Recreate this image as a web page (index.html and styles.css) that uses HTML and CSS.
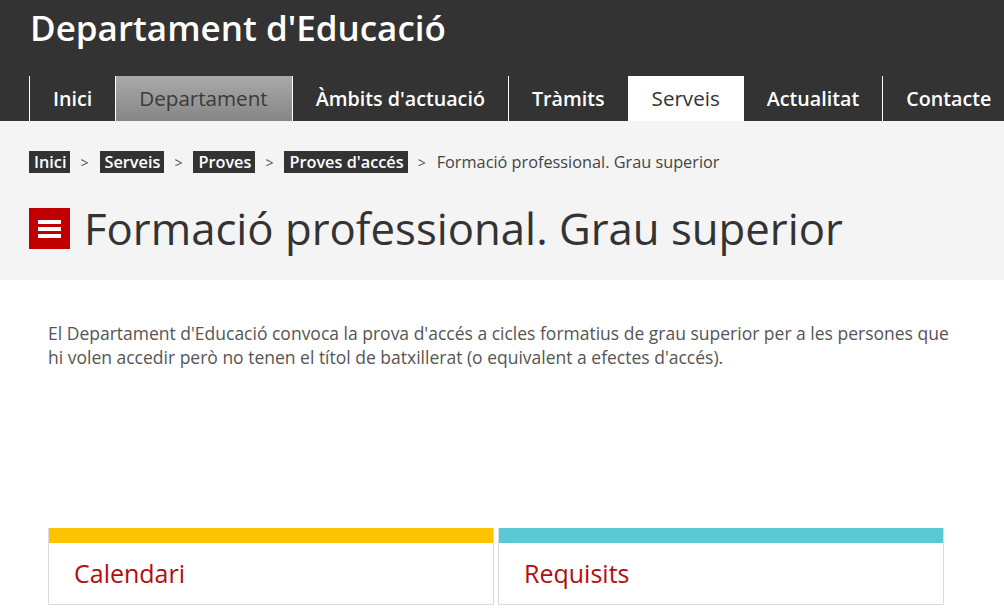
FILE: index.html
```html
<!DOCTYPE html>
<html lang="ca">
<head>
<meta charset="utf-8">
<title>Formació professional. Grau superior</title>
<link rel="stylesheet" href="styles.css">
</head>
<body>
<header class="site-header">
  <div class="brand">Departament d'Educació</div>
  <nav class="main-nav">
    <a class="tab" href="#">Inici</a>
    <a class="tab tab-grey" href="#">Departament</a>
    <a class="tab" href="#">Àmbits d'actuació</a>
    <a class="tab" href="#">Tràmits</a>
    <a class="tab tab-active" href="#">Serveis</a>
    <a class="tab" href="#">Actualitat</a>
    <a class="tab" href="#">Contacte</a>
  </nav>
</header>
<section class="page-head">
  <div class="crumbs">
    <a class="crumb" href="#">Inici</a><span class="sep">&gt;</span>
    <a class="crumb" href="#">Serveis</a><span class="sep">&gt;</span>
    <a class="crumb" href="#">Proves</a><span class="sep">&gt;</span>
    <a class="crumb" href="#">Proves d'accés</a><span class="sep">&gt;</span>
    <span class="crumb-current">Formació professional. Grau superior</span>
  </div>
  <h1 class="page-title">
    <span class="menu-icon"><span></span><span></span><span></span></span>
    Formació professional. Grau superior
  </h1>
</section>
<main class="content">
  <p class="intro">El Departament d'Educació convoca la prova d'accés a cicles formatius de grau superior per a les persones que hi volen accedir però no tenen el títol de batxillerat (o equivalent a efectes d'accés).</p>
  <div class="cards">
    <div class="card card-yellow"><div class="card-bar"></div><div class="card-body">Calendari</div></div>
    <div class="card card-teal"><div class="card-bar"></div><div class="card-body">Requisits</div></div>
  </div>
</main>
</body>
</html>
```

FILE: styles.css
```css
html, body {
  margin: 0;
  padding: 0;
  background: #fff;
  font-family: "Open Sans", "Noto Sans", sans-serif;
  overflow: hidden;
}

.site-header {
  background: #333333;
  height: 121px;
  display: flex;
  flex-direction: column;
}

.brand {
  color: #fff;
  font-size: 35px;
  font-weight: 600;
  line-height: 1;
  padding: 10px 0 0 30px;
  height: 76px;
  box-sizing: border-box;
  flex: none;
}

.main-nav {
  display: flex;
  padding-left: 29px;
  height: 45px;
  white-space: nowrap;
}

.tab {
  display: flex;
  align-items: center;
  border-left: 1px solid #fff;
  padding: 0 23px 1px 23px;
  color: #fff;
  text-decoration: none;
  font-size: 19.7px;
  font-weight: 600;
  flex: none;
}

.tab-grey {
  background: linear-gradient(#a9a9a9, #868686);
  color: #3a3a3a;
  font-weight: 400;
  font-size: 20.6px;
  padding-right: 24px;
}

.tab-active {
  background: #fff;
  color: #333;
  font-weight: 400;
  font-size: 20.6px;
}

.page-head {
  background: #f4f4f4;
  height: 159px;
  padding: 30px 0 0 29px;
  box-sizing: border-box;
}

.crumbs {
  display: flex;
  align-items: center;
  height: 22px;
  font-size: 16.3px;
}

.crumb {
  background: #333;
  color: #fff;
  font-weight: 600;
  text-decoration: none;
  padding: 0 4px 0 5px;
  line-height: 22px;
}

.sep {
  color: #555;
  font-size: 14px;
  padding: 0 11px 0 10px;
}

.crumb-current {
  color: #444;
}

.page-title {
  margin: 34px 0 0 0;
  display: flex;
  align-items: center;
  gap: 14px;
  font-size: 43.7px;
  font-weight: 400;
  color: #333;
  line-height: 1;
}

.menu-icon {
  width: 41px;
  height: 41px;
  background: #c00000;
  display: flex;
  flex-direction: column;
  align-items: center;
  justify-content: center;
  gap: 3px;
  flex: none;
}

.menu-icon span {
  width: 23px;
  height: 4px;
  background: #fff;
}

.content {
  padding: 41px 0 0 48px;
}

.intro {
  margin: 0;
  width: 910px;
  font-size: 17.5px;
  line-height: 24px;
  color: #555;
}

.cards {
  margin-top: 159px;
  display: flex;
  gap: 4px;
  width: 896px;
}

.card {
  flex: 1;
  border: 1px solid #dcdcdc;
  border-top: none;
  height: 76px;
}

.card-bar {
  height: 15px;
}

.card-yellow .card-bar { background: #fcc300; }
.card-teal .card-bar { background: #5bc8d5; }

.card-body {
  color: #b30d0d;
  font-size: 25px;
  padding: 13px 0 0 25px;
}
```
